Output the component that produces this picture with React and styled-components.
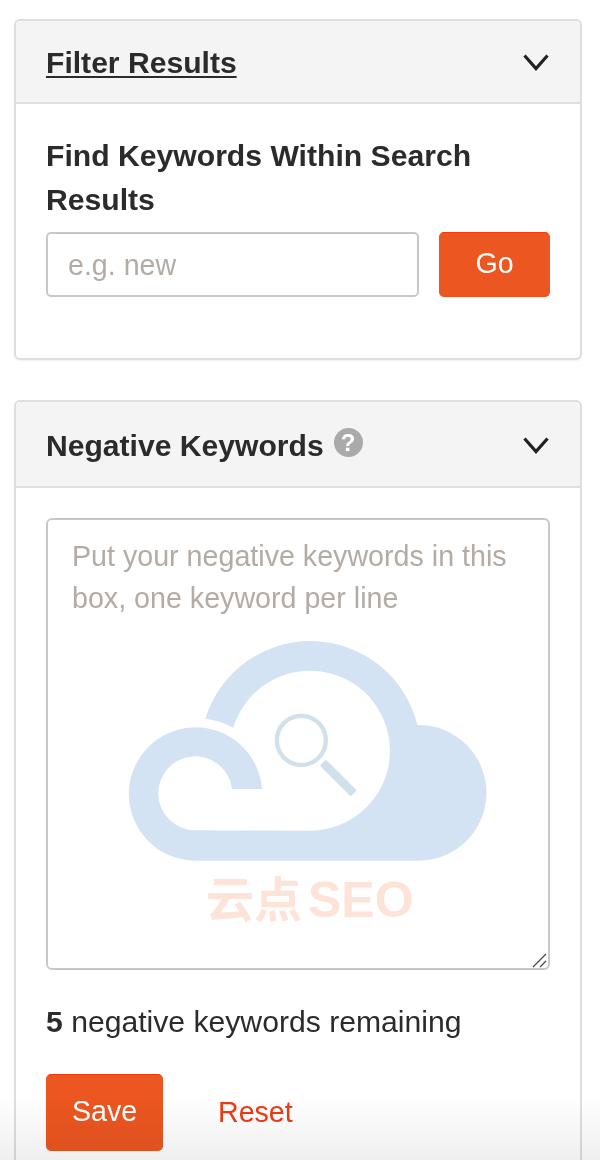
import React from 'react'
import styled, { createGlobalStyle } from 'styled-components'

const GlobalStyle = createGlobalStyle`
  html, body {
    margin: 0;
    height: 1160px;
    overflow: hidden;
    background: #fff;
  }
  body {
    font-family: "Liberation Sans", Arial, sans-serif;
    color: #2b2b2b;
  }
  * { box-sizing: border-box; }
`
const Page = styled.main`
  position: relative;
  height: 1160px;
  overflow: hidden;
  padding: 19px 18px 0 14px;
  display: flex;
  flex-direction: column;
  gap: 40px;
`
const Card = styled.section`
  border: 2px solid #dedede;
  border-radius: 6px;
  background: #fff;
  flex: none;
  box-shadow: 0 1px 2px rgba(0, 0, 0, 0.06);
`
const CardHeader = styled.header`
  height: ${(p) => p.$height}px;
  display: flex;
  align-items: center;
  justify-content: space-between;
  padding: ${(p) => p.$nudge}px 30px 0;
  background: #f4f4f4;
  border-bottom: 2px solid #dedede;
  border-radius: 4px 4px 0 0;
`
const TitleRow = styled.div`
  display: flex;
  align-items: center;
  gap: 10px;
`
const CardTitle = styled.h2`
  margin: 0;
  font-size: 30.1px;
  line-height: 36px;
  font-weight: 700;
  color: #2b2b2b;
  text-decoration: ${(p) => (p.$underline ? 'underline' : 'none')};
  text-decoration-thickness: 2px;
  text-underline-offset: 3px;
`
const Chevron = styled.svg`
  width: 28px;
  height: 19px;
  flex: none;
`
const HelpIcon = styled.span`
  width: 29px;
  height: 29px;
  border-radius: 50%;
  background: #aaaaaa;
  color: #fff;
  font-size: 24px;
  line-height: 29px;
  font-weight: 700;
  text-align: center;
  margin-top: -6px;
`
const FilterBody = styled.div`
  padding: 30px 30px 61px;
`
const FieldLabel = styled.h3`
  margin: 0 0 10px;
  font-size: 30.15px;
  line-height: 44px;
  font-weight: 700;
  color: #2b2b2b;
`
const SearchRow = styled.div`
  display: flex;
  gap: 20px;
`
const SearchInput = styled.input`
  width: 373px;
  height: 65px;
  padding: 2px 20px 0;
  border: 2px solid #c8c8c8;
  border-radius: 5px;
  font: 28.6px "Liberation Sans", Arial, sans-serif;
  color: #2b2b2b;
  outline: none;
  &::placeholder {
    color: #b3aba4;
    opacity: 1;
  }
`
const PrimaryButton = styled.button`
  width: ${(p) => p.$width}px;
  height: ${(p) => p.$height}px;
  border: 1px solid #ec5620;
  border-top-color: #ee3a12;
  border-radius: 5px;
  background: #ec5620;
  color: #fff;
  font: 28.6px "Liberation Sans", Arial, sans-serif;
  padding: 0 0 2px;
`
const NegativeBody = styled.div`
  padding: 30px 30px 40px;
`
const AreaWrap = styled.div`
  position: relative;
  width: 504px;
  height: 452px;
`
const KeywordsArea = styled.textarea`
  display: block;
  width: 504px;
  height: 452px;
  padding: 15px 24px;
  border: 2px solid #c8c8c8;
  border-radius: 6px;
  font: 28.65px/42px "Liberation Sans", Arial, sans-serif;
  color: #2b2b2b;
  outline: none;
  resize: none;
  background: transparent;
  &::placeholder {
    color: #b3aba4;
    opacity: 1;
  }
`
const ResizeGrip = styled.svg`
  position: absolute;
  right: 2px;
  bottom: 2px;
  width: 16px;
  height: 16px;
  pointer-events: none;
`
const Watermark = styled.div`
  position: absolute;
  left: 54px;
  top: 102px;
  width: 410px;
  pointer-events: none;
`
const CloudSvg = styled.svg`
  display: block;
  width: 410px;
  height: 256px;
`
const WatermarkText = styled.div`
  margin: -3px 0 0 106px;
  font-family: "Noto Sans CJK SC", sans-serif;
  font-size: 48px;
  line-height: 46px;
  font-weight: 700;
  color: #fde3d8;
  white-space: nowrap;
`
const WatermarkLatin = styled.span`
  font-family: "Liberation Sans", sans-serif;
  font-size: 50px;
  margin-left: 6px;
`
const Remaining = styled.p`
  margin: 32px 0 0;
  font-size: 30.15px;
  line-height: 40px;
  color: #2b2b2b;
`
const Actions = styled.div`
  margin-top: 32px;
  display: flex;
  align-items: center;
  gap: 55px;
`
const ResetLink = styled.a`
  font-size: 28.6px;
  color: #ee3a12;
`
const BottomFade = styled.div`
  position: absolute;
  left: 0;
  right: 0;
  bottom: 0;
  height: 62px;
  pointer-events: none;
  mix-blend-mode: multiply;
  background: linear-gradient(to bottom, #ffffff, #efefef);
`

function ChevronDown() {
  return (
    <Chevron viewBox="0 0 28 19">
      <polyline points="2.5,2.5 14,15.5 25.5,2.5" fill="none" stroke="#222" strokeWidth="3.2" />
    </Chevron>
  )
}

function App() {
  return (
    <>
      <GlobalStyle />
      <Page>
        <Card>
          <CardHeader $height={83} $nudge={2}>
            <CardTitle $underline>Filter Results</CardTitle>
            <ChevronDown />
          </CardHeader>
          <FilterBody>
            <FieldLabel>Find Keywords Within Search Results</FieldLabel>
            <SearchRow>
              <SearchInput placeholder="e.g. new" />
              <PrimaryButton $width={111} $height={65}>Go</PrimaryButton>
            </SearchRow>
          </FilterBody>
        </Card>
        <Card>
          <CardHeader $height={86} $nudge={3}>
            <TitleRow>
              <CardTitle>Negative Keywords</CardTitle>
              <HelpIcon>?</HelpIcon>
            </TitleRow>
            <ChevronDown />
          </CardHeader>
          <NegativeBody>
            <AreaWrap>
              <KeywordsArea placeholder="Put your negative keywords in this box, one keyword per line" />
              <ResizeGrip viewBox="0 0 16 16">
                <path d="M1 15 L14 2 M8 15 L14 9" stroke="#444" strokeWidth="1.2" fill="none" />
              </ResizeGrip>
              <Watermark>
                <CloudSvg viewBox="0 0 1230 768">
                  <path
                    fill="#d4e3f4"
                    d="M396 507 A111 111 0 1 0 285 631 L632 632 A240 240 0 1 0 400 323 A227 227 0 0 0 316 296 A330 330 0 0 1 952 315 L956 315 A203.5 203.5 0 0 1 956 722 L285 722 A200 200 0 1 1 486 507 Z"
                  />
                  <circle cx="604" cy="361" r="73.5" fill="none" stroke="#cfe1ea" strokeWidth="13" />
                  <rect x="-65.5" y="-13" width="131" height="26" rx="4" fill="#cfe1ea" transform="translate(715 474) rotate(45)" />
                </CloudSvg>
                <WatermarkText>云点<WatermarkLatin>SEO</WatermarkLatin></WatermarkText>
              </Watermark>
            </AreaWrap>
            <Remaining><b>5</b> negative keywords remaining</Remaining>
            <Actions>
              <PrimaryButton $width={117} $height={77}>Save</PrimaryButton>
              <ResetLink>Reset</ResetLink>
            </Actions>
          </NegativeBody>
        </Card>
        <BottomFade />
      </Page>
    </>
  )
}

export default App
